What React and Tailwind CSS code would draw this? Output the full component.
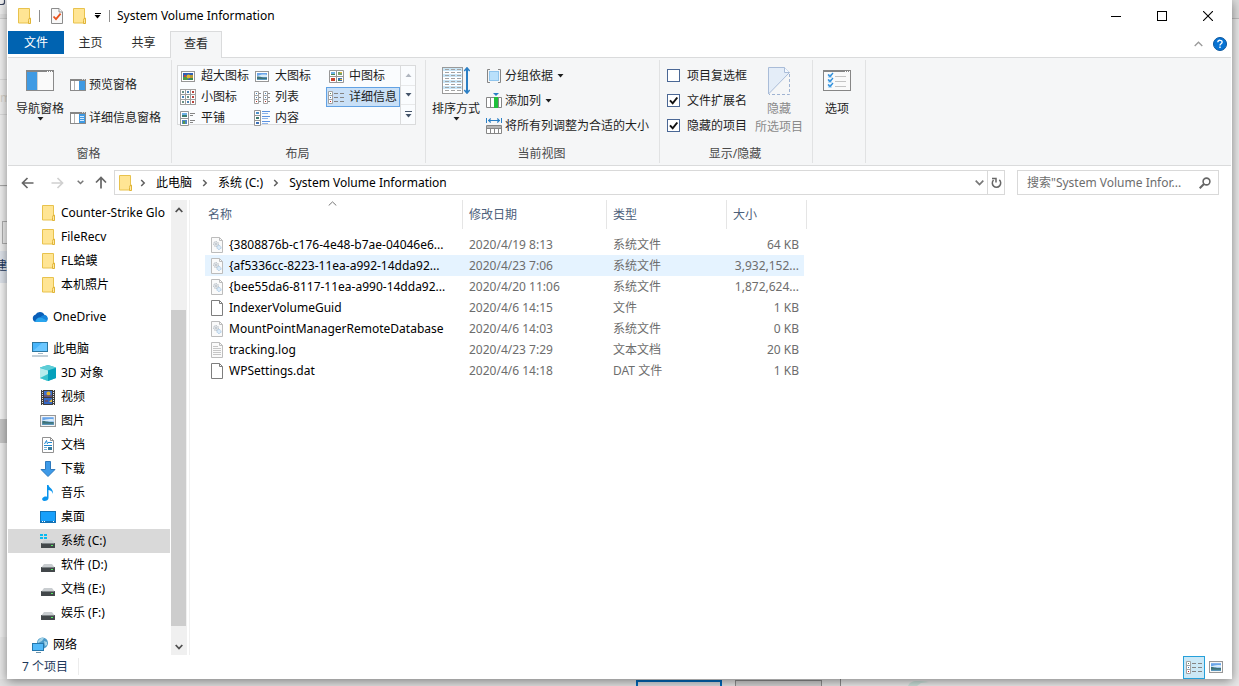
import React, { useState } from "react";

/* ---------- small glyphs ---------- */

const Folder = () => (
  <svg width="14" height="16" viewBox="0 0 14 16" className="shrink-0">
    <path d="M.5 .5h11v9.500h1v5h-12z" fill="#ffe594" stroke="#e8c24d" />
    <path d="M11 10.500h1.500v5h-2v-3z" fill="#ffe9a6" stroke="#e0b437" />
  </svg>
);

const Caret = ({ className = "" }) => (
  <svg width="7" height="4" viewBox="0 0 7 4" className={className}>
    <path d="M0.500 0h6L3.500 3.500z" fill="currentColor" />
  </svg>
);

const Chevron = () => (
  <svg width="6" height="8" viewBox="0 0 6 8" className="shrink-0">
    <path d="M1.200 1l3 3-3 3" fill="none" stroke="#5f5f5f" strokeWidth="1.500" />
  </svg>
);

const CheckedPage = () => (
  <svg width="14" height="16" viewBox="0 0 14 16">
    <path d="M1.500 .5h7.500l3.500 3.500v11.500h-11z" fill="#f8f8f8" stroke="#8c8c8c" />
    <path d="M9 .5v3.500h3.500" fill="#fff" stroke="#8c8c8c" />
    <path d="M3.500 8.500l2.500 2.700 4.600-5.500" fill="none" stroke="#e8521d" strokeWidth="1.800" />
  </svg>
);

const NavPaneIcon = () => (
  <svg width="28" height="21" viewBox="0 0 28 21">
    <rect x=".5" y=".5" width="27" height="20" fill="#fafafa" stroke="#8a8a8a" />
    <rect x="0" y="0" width="28" height="2" fill="#868686" />
    <path d="M21 1.500h1M23 1.500h1M25 1.500h1" stroke="#fff" />
    <rect x="1" y="2" width="10" height="18" fill="#3f9ae3" />
    <path d="M11.500 2v18" stroke="#d0d0d0" />
  </svg>
);

const PaneIcon = ({ lines }) => (
  <svg width="16" height="12" viewBox="0 0 16 12" className="shrink-0">
    <rect x=".5" y=".5" width="15" height="11" fill="#fff" stroke="#8a8a8a" />
    <rect width="16" height="2" fill="#868686" />
    <path d="M12 .5h1M14 .5h1" stroke="#ddd" />
    <path d="M4.500 2v9" stroke="#b4b4b4" />
    <rect x="9" y="2" width="6" height="9" fill="#3f9ae3" />
    {lines && <path d="M10 4.500h4M10 6.500h4M10 8.500h4" stroke="#d7ebff" />}
  </svg>
);

const Photo = ({ w = 14, h = 11 }) => (
  <svg width={w} height={h} viewBox="0 0 14 11" preserveAspectRatio="none" className="shrink-0">
    <rect x=".5" y=".5" width="13" height="10" fill="#fff" stroke="#979797" />
    <rect x="2" y="2" width="10" height="7" fill="#6aa5ea" />
    <path d="M2 5c3-1 6-2 10-1v2H2z" fill="#d9ecf8" />
    <path d="M2 5.500c3-.5 4 1.200 10 1V9H2z" fill="#3f7378" />
    <path d="M2 8h10v1H2z" fill="#5e9cc4" />
  </svg>
);

const HugeIcon = () => (
  <svg width="14" height="11" viewBox="0 0 14 11">
    <rect x=".5" y=".5" width="13" height="10" fill="#fff" stroke="#979797" />
    <rect x="2" y="2" width="10" height="7" fill="#2f5fb4" />
    <rect x="2" y="6" width="5" height="3" fill="#4f9a45" />
    <circle cx="7.500" cy="5.500" r="2" fill="#e3b52c" />
    <rect x="9" y="4" width="3" height="3" fill="#b99a38" />
    <rect x="3" y="4" width="2" height="2" fill="#c64b32" />
    <rect x="9" y="7" width="3" height="2" fill="#3c8a4c" />
  </svg>
);

const SmallGridIcon = () => (
  <svg width="16" height="16" viewBox="0 0 16 16">
    {[0, 5, 10].map((y) =>
      [0, 5, 10].map((x) => (
        <g key={x + "-" + y}>
          <rect x={x + 0.5} y={y + 0.5} width="5" height="5" fill="#fff" stroke="#a0a0a0" />
          <rect
            x={x + 2}
            y={y + 2}
            width="2"
            height="2"
            fill={x === 10 ? "#b8413a" : (x + y) % 2 ? "#4a83b5" : "#6a8f86"}
          />
        </g>
      ))
    )}
  </svg>
);

const MediumIcon = () => (
  <svg width="15" height="13" viewBox="0 0 15 13">
    <path d="M.5 .5h14v12H.5zM7.500 .5v12M.5 6.500h14" fill="#fff" stroke="#979797" />
    <rect x="2" y="2" width="4" height="3" fill="#6fb0e6" />
    <rect x="9" y="2" width="4" height="3" fill="#7aa06a" />
    <rect x="2" y="8" width="4" height="3" fill="#c8432c" />
    <rect x="9" y="8" width="4" height="3" fill="#3c6fb0" />
    <path d="M2 4.500h4M9 10.500h2" stroke="#3f8655" />
    <path d="M11 2.500h2M11 9.500h2" stroke="#e2b93a" />
  </svg>
);

const ListIcon = () => (
  <svg width="16" height="13" viewBox="0 0 16 13">
    {[0, 9].map((x) => (
      <g key={x}>
        <path d={`M${x + 0.5} .5h4v12h-4zM${x + 0.5} 4.500h4M${x + 0.5} 8.500h4`} fill="#fff" stroke="#a3a3a3" />
        <path d={`M${x + 2} 2.500h1M${x + 2} 6.500h1`} stroke="#4a83b5" />
        <path d={`M${x + 2} 10.500h1`} stroke="#b8322a" />
        <path d={`M${x + 5} 2.500h2M${x + 5} 6.500h2M${x + 5} 10.500h2`} stroke="#8a8a8a" />
      </g>
    ))}
  </svg>
);

const DetailsIcon = () => (
  <svg width="16" height="13" viewBox="0 0 16 13">
    <path d="M.5 .5h4v12h-4zM.5 4.500h4M.5 8.500h4" fill="#fff" stroke="#a3a3a3" />
    <path d="M2 2.500h1" stroke="#558a66" />
    <path d="M2 6.500h1" stroke="#3b7cc0" />
    <path d="M2 10.500h1" stroke="#c0282a" />
    <path d="M6 2.500h4M12 2.500h4M6 6.500h4M12 6.500h4M6 10.500h4M12 10.500h4" stroke="#858585" />
  </svg>
);

const TilesIcon = () => (
  <svg width="16" height="15" viewBox="0 0 16 15">
    <path d="M.5 .5h8v14h-8zM.5 7.500h8" fill="#fff" stroke="#979797" />
    <rect x="2" y="2" width="5" height="4" fill="#6fb0e6" />
    <rect x="2" y="4" width="5" height="2" fill="#3c7d70" />
    <rect x="2" y="9" width="5" height="4" fill="#4d86c4" />
    <rect x="3" y="10" width="2" height="3" fill="#58984b" />
    <path d="M10 2.500h5M10 4.500h3M10 9.500h5M10 11.500h3" stroke="#858585" />
  </svg>
);

const ContentIcon = () => (
  <svg width="16" height="16" viewBox="0 0 16 16">
    <path d="M.5 .5h6v15h-6zM.5 5.500h6M.5 10.500h6" fill="#fff" stroke="#979797" />
    <rect x="2" y="2" width="3" height="2" fill="#4b8fca" />
    <rect x="2" y="7" width="3" height="2" fill="#3f7a6d" />
    <rect x="2" y="12" width="3" height="2" fill="#3b6fb5" />
    <path d="M8 1.500h8M8 6.500h8M8 11.500h8" stroke="#5c92e0" />
    <path d="M8 3.500h6M8 8.500h6M8 13.500h6" stroke="#8fb5ea" />
  </svg>
);

const SortIcon = () => (
  <svg width="28" height="27" viewBox="0 0 28 27">
    <rect x=".5" y=".5" width="20" height="26" fill="#fff" stroke="#9a9a9a" />
    <path d="M1 2.500h19M1 8.500h19M1 14.500h19M1 20.500h19" stroke="#c9e6f7" strokeWidth="3" />
    <path
      d="M3 2.500h16M3 5.500h16M3 8.500h16M3 11.500h16M3 14.500h16M3 17.500h16M3 20.500h16M3 23.500h16"
      stroke="#a3a3a3"
      strokeDasharray="4 2"
    />
    <path d="M25 2v23" stroke="#2b7fc4" strokeWidth="2" />
    <path d="M22.300 4L25 .8 27.700 4M22.300 23l2.700 3.200 2.700-3.200" fill="none" stroke="#2b7fc4" strokeWidth="1.500" />
  </svg>
);

const GroupIcon = () => (
  <svg width="16" height="14" viewBox="0 0 16 14">
    <rect x="3.500" y="2.500" width="9" height="9" fill="#b9e0fb" stroke="#8fc4ec" />
    <path d="M4 .5H1.500v13H4M12 .5h2.500v13H12" fill="none" stroke="#858585" />
  </svg>
);

const AddColumnIcon = () => (
  <svg width="16" height="16" viewBox="0 0 16 16">
    <path d="M.5 4.500h15v10H.5zM4.500 4.500v10M12.500 4.500v10" fill="#fff" stroke="#868686" />
    <rect x="8" y="4" width="4" height="11" fill="#1fbf3c" />
    <path d="M7 0h6l-3 3z" fill="#2b7fc4" />
  </svg>
);

const SizeColumnsIcon = () => (
  <svg width="16" height="16" viewBox="0 0 16 16">
    <path d="M.5 0v5M15.500 0v5" stroke="#2b7fc4" />
    <path d="M2 2.500h12M4.700 .5l-2 2 2 2M11.300 .5l2 2-2 2" fill="none" stroke="#2b7fc4" strokeWidth="1.100" />
    <path d="M.5 7.500h15v8H.5zM.5 10.500h15M4.500 10.500v5M8.500 10.500v5M12.500 10.500v5" fill="#fff" stroke="#868686" />
    <rect x="1" y="8" width="14" height="2" fill="#b5b5b5" />
  </svg>
);

const HideIcon = () => (
  <svg width="23" height="28" viewBox="0 0 23 28">
    <path d="M.5 .5h16l5 5L.5 27z" fill="#e4edf8" stroke="#a9bcd8" />
    <path d="M16.500 .5v5h5" fill="#f5f9ff" stroke="#a9bcd8" />
    <path d="M21.500 7v20.500H1" fill="none" stroke="#9fb3d2" strokeDasharray="3 2" />
  </svg>
);

const OptionsIcon = () => (
  <svg width="28" height="21" viewBox="0 0 28 21">
    <rect x=".5" y=".5" width="27" height="20" fill="#fafafa" stroke="#868686" />
    <rect width="28" height="2" fill="#868686" />
    <path d="M22 1.500h1M24 1.500h1M26 1.500h1" stroke="#fff" />
    {[3, 8, 13].map((y) => (
      <g key={y}>
        <rect x="5" y={y + 1} width="4" height="4" fill="#c4e2f8" />
        <path d={`M5 ${y + 1.5}l2 2L10 ${y}`} fill="none" stroke="#2f8fdc" strokeWidth="1.300" />
        <path d={`M12 ${y + 3.5}h11`} stroke="#c4c4c4" />
      </g>
    ))}
  </svg>
);

/* ---------- navigation tree icons ---------- */

const CloudIcon = () => (
  <svg width="17" height="16" viewBox="0 0 17 16" className="shrink-0">
    <path d="M4 13a3.700 3.700 0 0 1-.6-7.200A5 5 0 0 1 12.500 6 3.700 3.700 0 0 1 13 13z" fill="#0a5fb8" />
    <path d="M12.500 6a3.600 3.600 0 0 1 .8 7H6L8 8.500A6 6 0 0 1 12.500 6z" fill="#1685dc" />
    <path d="M3 13c1-4 4-5.500 7-4l5 2.500A2.500 2.500 0 0 1 13 13z" fill="#2aa5ee" />
  </svg>
);
const ComputerIcon = () => (
  <svg width="17" height="16" viewBox="0 0 17 16" className="shrink-0">
    <rect x=".5" y="1.500" width="15" height="9" fill="#48b5fb" stroke="#2c769f" />
    <path d="M1 10L10 2h5v8z" fill="#6bc7ff" />
    <path d="M6 12.500h5" stroke="#a5bac7" />
    <path d="M0 15h16" stroke="#8aa2b1" />
  </svg>
);
const CubeIcon = () => (
  <svg width="16" height="16" viewBox="0 0 16 16" className="shrink-0">
    <path d="M8 0l8 2.500v10.500L8 16 0 13V2.500z" fill="#28bccd" />
    <path d="M0 2.500L8 0l8 2.500L8 5.500z" fill="#5ecdd6" />
    <path d="M0 3l8 2.500V16L0 13z" fill="#b5eced" />
    <path d="M0 13l8-4v7z" fill="#37c2cd" />
    <path d="M16 3L8 5.500V16l8-3z" fill="#04a0bb" />
  </svg>
);
const VideoIcon = () => (
  <svg width="16" height="16" viewBox="0 0 16 16" className="shrink-0">
    <rect x="1" y="1" width="14" height="15" fill="#3d3d3d" />
    <path d="M2.500 1v15M13.500 1v15" stroke="#e8e8e8" strokeDasharray="1 1" />
    <rect x="4" y="2" width="8" height="6" fill="#3c70d0" />
    <rect x="4" y="9" width="8" height="6" fill="#3568c5" />
    <circle cx="8.500" cy="4.500" r="2" fill="#e4b32a" />
    <path d="M4 7h8M5 12h3" stroke="#8b3d28" />
    <path d="M9 13l3-3v3z" fill="#e7bf38" />
  </svg>
);
const DocumentIcon = () => (
  <svg width="16" height="16" viewBox="0 0 16 16" className="shrink-0">
    <path d="M2.500 .5h8l3 3v12h-11z" fill="#fff" stroke="#919191" />
    <path d="M10.500 .5v3h3" fill="none" stroke="#919191" />
    <path d="M4.500 7l2-3.500 1 3.500M8 5.500h4M4 8.500h8" fill="none" stroke="#2188cf" />
    <path d="M4 10.500h3M4 12.500h3" stroke="#75afd6" />
    <rect x="8" y="10" width="4" height="3" fill="#367b9d" />
  </svg>
);
const DownloadIcon = () => (
  <svg width="16" height="16" viewBox="0 0 16 16" className="shrink-0">
    <path d="M5.500 .5h5v8h4.500L8 15.500 1 8.500h4.500z" fill="#3d9ae8" stroke="#2d79bd" />
  </svg>
);
const MusicIcon = () => (
  <svg width="16" height="16" viewBox="0 0 16 16" className="shrink-0">
    <path
      d="M7 0h1.500c.5 3 5 3.500 4.500 9-.6-2.500-2-3.500-4.500-4v8c0 2-2 3-4 3S1.500 14.500 2.500 13 5.500 11 7 11.700z"
      fill="#0a94ed"
    />
  </svg>
);
const DesktopIcon = () => (
  <svg width="16" height="16" viewBox="0 0 16 16" className="shrink-0">
    <rect x=".5" y="2.500" width="15" height="11" fill="#18a0fb" stroke="#1272b6" />
    <path d="M1 12.500h14" stroke="#1272b6" />
    <path d="M2 12.500h1M4 12.500h1M13 12.500h1" stroke="#fff" />
  </svg>
);
const DriveIcon = ({ system }) => (
  <svg width="16" height="16" viewBox="0 0 16 16" className="shrink-0">
    <path d="M4 7h8l3 4H1z" fill="#c9cdd0" />
    <rect x="1" y="10" width="14" height="5" rx=".5" fill="#42474a" />
    <path d="M2 10.500h12" stroke="#7c8285" />
    <rect x="11" y="12" width="2" height="1" fill="#54ed62" />
    {system && (
      <>
        <rect width="7" height="7" fill="#d9d9d9" />
        <path d="M0 1h3v2H0zM4 1h3v2H4zM0 4h3v2H0zM4 4h3v2H4z" fill="#0abaf0" />
      </>
    )}
  </svg>
);
const NetworkIcon = () => (
  <svg width="17" height="16" viewBox="0 0 17 16" className="shrink-0">
    <circle cx="10.500" cy="6" r="5.500" fill="#4c9bc9" />
    <path d="M6 4c2-3 4-4 6-3l-2 3-4 2zM12 4l3 1v3l-2 1z" fill="#a5d4e8" />
    <rect x=".5" y="6.500" width="11" height="7" fill="#52bafa" stroke="#2577ac" />
    <path d="M4 15.500h5" stroke="#6d94ac" />
  </svg>
);

/* ---------- file icons ---------- */

const FileIcon = ({ kind }) => (
  <svg width="13" height="16" viewBox="0 0 13 16" className="shrink-0">
    <path
      d="M.5 .5h8l3 3v12H.5z"
      fill={kind === "blank" ? "#fff" : "#fafafa"}
      stroke={kind === "blank" ? "#7e7e7e" : "#bcbcbc"}
    />
    <path d="M8.500 .5v3h3" fill="none" stroke={kind === "blank" ? "#7e7e7e" : "#bcbcbc"} />
    {kind === "system" && (
      <>
        <circle cx="5" cy="7" r="2.500" fill="#e9edf0" stroke="#b5bcc3" strokeDasharray="1.500 .7" />
        <circle cx="5" cy="7" r="1" fill="none" stroke="#bcc2c8" />
        <circle cx="8" cy="10.500" r="2" fill="#dcebf8" stroke="#a5c5e3" strokeDasharray="1.500 .7" />
      </>
    )}
    {kind === "text" && <path d="M2 4.500h5M2 6.500h8M2 8.500h8M2 10.500h8M2 12.500h8" stroke="#c6c6c6" />}
  </svg>
);

/* ---------- data ---------- */

const tree = [
  { label: "Counter-Strike Glo", icon: Folder, level: 2, folder: true },
  { label: "FileRecv", icon: Folder, level: 2, folder: true },
  { label: "FL蛤蟆", icon: Folder, level: 2, folder: true },
  { label: "本机照片", icon: Folder, level: 2, folder: true },
  { label: "OneDrive", icon: CloudIcon, level: 1 },
  { label: "此电脑", icon: ComputerIcon, level: 1 },
  { label: "3D 对象", icon: CubeIcon, level: 2 },
  { label: "视频", icon: VideoIcon, level: 2 },
  { label: "图片", icon: () => <Photo w={16} h={12} />, level: 2 },
  { label: "文档", icon: DocumentIcon, level: 2 },
  { label: "下载", icon: DownloadIcon, level: 2 },
  { label: "音乐", icon: MusicIcon, level: 2 },
  { label: "桌面", icon: DesktopIcon, level: 2 },
  { label: "系统 (C:)", icon: () => <DriveIcon system />, level: 2, selected: true },
  { label: "软件 (D:)", icon: DriveIcon, level: 2 },
  { label: "文档 (E:)", icon: DriveIcon, level: 2 },
  { label: "娱乐 (F:)", icon: DriveIcon, level: 2 },
  { label: "网络", icon: NetworkIcon, level: 1 },
];

const files = [
  ["{3808876b-c176-4e48-b7ae-04046e6...", "2020/4/19 8:13", "系统文件", "64 KB", "system"],
  ["{af5336cc-8223-11ea-a992-14dda92...", "2020/4/23 7:06", "系统文件", "3,932,152...", "system"],
  ["{bee55da6-8117-11ea-a990-14dda92...", "2020/4/20 11:06", "系统文件", "1,872,624...", "system"],
  ["IndexerVolumeGuid", "2020/4/6 14:15", "文件", "1 KB", "blank"],
  ["MountPointManagerRemoteDatabase", "2020/4/6 14:03", "系统文件", "0 KB", "system"],
  ["tracking.log", "2020/4/23 7:29", "文本文档", "20 KB", "text"],
  ["WPSettings.dat", "2020/4/6 14:18", "DAT 文件", "1 KB", "blank"],
];

const layouts = [
  ["超大图标", HugeIcon],
  ["大图标", Photo],
  ["中图标", MediumIcon],
  ["小图标", SmallGridIcon],
  ["列表", ListIcon],
  ["详细信息", DetailsIcon],
  ["平铺", TilesIcon],
  ["内容", ContentIcon],
];

/* ---------- sections ---------- */

/* Slivers of the windows that lie behind the file manager. */
function Desktop() {
  return (
    <div aria-hidden="true" className="absolute inset-0 overflow-hidden bg-[#e8e8e8] text-xs">
      <div className="absolute left-0 top-0 h-[186px] w-2 border-b border-[#a8a8a8] bg-[#f0f0f0]" />
      <div className="absolute left-0 top-[14px] h-[5px] w-2 border-b border-[#cfcfcf] bg-[#e4e4e4]" />
      <svg width="7" height="6" className="absolute left-0 top-0">
        <path d="M4.500 0v2.500c0 1.500-1 2-2.500 2H0" fill="none" stroke="#3c4660" strokeWidth="1.200" />
      </svg>
      <div className="absolute left-0 top-[79px] h-px w-2 bg-[#dcdcdc]" />
      <span className="absolute left-0 top-[90px] text-[#d8d4cb]">m</span>
      <div className="absolute left-0 top-[114px] h-px w-2 bg-[#dcdcdc]" />
      <div className="absolute left-0 top-[187px] h-[450px] w-2 bg-[#f0f0f0]" />
      <div className="absolute left-[2px] top-[221px] h-[23px] w-4 border border-[#b0b0b0]" />
      <div className="absolute left-0 top-[251px] h-8 w-2 bg-[#dfe4ec]" />
      <span className="absolute -left-[5px] top-[258px] text-[#1e3a5f]">建</span>
      <div className="absolute left-0 top-[283px] h-[136px] w-2 bg-[#f6f6f6]" />
      <div className="absolute left-0 top-[419px] h-6 w-2 bg-[#c8c8c8]" />
      <div className="absolute right-0 top-0 h-[19px] w-[7px] border-b border-[#bdbdbd] bg-[#dcdcdc]" />
      <div className="absolute bottom-0 left-0 h-[7px] w-[841px] border-r border-[#8c8c8c] bg-[#e0e0e0]" />
      <div className="absolute bottom-0 left-[636px] h-[6px] w-[86px] border-2 border-b-0 border-[#0067b8] bg-[#d5d8dc]" />
      <div className="absolute bottom-0 left-[735px] h-[6px] w-[87px] border border-b-0 border-[#8c8c8c] bg-[#d0d0d0]" />
      <svg width="24" height="6" className="absolute bottom-0 left-[907px]">
        <path d="M1 6c1-3 4-5 9-5 4 0 8 0 12 1l-8 1-4 3z" fill="#c9dfd8" />
      </svg>
    </div>
  );
}

function TitleBar() {
  return (
    <header className="flex h-[31px] shrink-0 items-center pl-[10px]">
      <Folder />
      <span className="ml-[7px] h-3 w-px bg-[#8e8e8e]" />
      <button type="button" aria-label="属性" className="ml-[10px]">
        <CheckedPage />
      </button>
      <button type="button" aria-label="新建文件夹" className="ml-[9px]">
        <Folder />
      </button>
      <button
        type="button"
        aria-label="自定义快速访问工具栏"
        className="ml-[7px] flex flex-col items-center gap-px text-black"
      >
        <span className="h-px w-[6px] bg-black" />
        <Caret />
      </button>
      <span className="ml-2 h-3 w-px bg-[#8e8e8e]" />
      <h1 className="ml-[7px] flex-1 text-black">System Volume Information</h1>
      <button type="button" aria-label="最小化" className="flex h-full w-[46px] items-center justify-center">
        <svg width="10" height="10">
          <path d="M0 5.500h10" stroke="#000" />
        </svg>
      </button>
      <button type="button" aria-label="最大化" className="flex h-full w-[46px] items-center justify-center">
        <svg width="10" height="10">
          <rect x=".5" y=".5" width="9" height="9" fill="none" stroke="#000" />
        </svg>
      </button>
      <button type="button" aria-label="关闭" className="flex h-full w-[46px] items-center justify-center">
        <svg width="10" height="10">
          <path d="M0 0l10 10M10 0L0 10" stroke="#000" strokeWidth="1.100" />
        </svg>
      </button>
    </header>
  );
}

function RibbonTabs() {
  return (
    <nav className="flex h-[27px] shrink-0 items-stretch border-b border-[#dadbdc]">
      <button type="button" className="mb-[3px] w-14 bg-[#0063b1] text-white">文件</button>
      <button type="button" className="w-[53px] pb-[2px]">主页</button>
      <button type="button" className="w-[53px] pb-[2px]">共享</button>
      <button type="button" className="-mb-px w-[52px] border border-b-0 border-[#dadbdc] bg-[#f5f6f7] pb-[2px]">
        查看
      </button>
      <span className="flex-1" />
      <button type="button" aria-label="最小化功能区" className="mr-[10px]">
        <svg width="9" height="6">
          <path d="M.7 5l3.800-3.800L8.300 5" fill="none" stroke="#9a9a9a" strokeWidth="1.300" />
        </svg>
      </button>
      <button type="button" aria-label="帮助" className="mr-1">
        <svg width="14" height="14" viewBox="0 0 14 14">
          <circle cx="7" cy="7" r="6.500" fill="#0873d3" stroke="#0a559c" />
          <path
            d="M4.800 5.200c.2-2.600 4.400-2.400 4.300 0 0 1.500-2.100 1.500-2.100 3.200M7 9.600v1.500"
            fill="none"
            stroke="#fff"
            strokeWidth="1.400"
          />
        </svg>
      </button>
    </nav>
  );
}

function Group({ label, className, children }) {
  return (
    <section className={"my-[2px] flex shrink-0 flex-col border-r border-[#e1e2e3] " + className}>
      <div className="flex h-[85px]">{children}</div>
      <h2 className="pr-[2px] text-center leading-[18px] text-[#4a4a4a]">{label}</h2>
    </section>
  );
}

function BigButton({ icon, label, caret, className = "" }) {
  return (
    <button type="button" className={"flex flex-col items-center self-start " + className}>
      <span className="flex h-[41px] items-center">{icon}</span>
      <span className="mt-px leading-[14px]">{label}</span>
      {caret && <Caret className="mt-px" />}
    </button>
  );
}

function SmallButton({ icon, label, caret, className = "h-[25px]" }) {
  return (
    <button type="button" className={"flex items-center gap-[3px] whitespace-nowrap " + className}>
      {icon}
      <span>{label}</span>
      {caret && <Caret className="ml-px" />}
    </button>
  );
}

function Option({ label, initial }) {
  const [on, setOn] = useState(initial);
  return (
    <label className="flex h-[25px] items-center gap-[7px] whitespace-nowrap">
      <span className="grid">
        <input
          type="checkbox"
          checked={on}
          onChange={() => setOn(!on)}
          className="peer col-start-1 row-start-1 size-[13px] appearance-none border border-[#4a6795] bg-white"
        />
        <svg
          width="13"
          height="13"
          className="pointer-events-none col-start-1 row-start-1 hidden peer-checked:block"
        >
          <path d="M3 6.300l2.700 3L10.300 3.500" fill="none" stroke="#111" strokeWidth="2" />
        </svg>
      </span>
      {label}
    </label>
  );
}

function Ribbon() {
  const [view, setView] = useState("详细信息");
  return (
    <div className="flex h-[108px] shrink-0 border-b border-[#dadbdc] bg-[#f5f6f7] text-[#1e1e1e]">
      <Group label="窗格" className="w-[164px]">
        <BigButton className="ml-2" icon={<NavPaneIcon />} label="导航窗格" caret />
        <div className="ml-[6px] flex flex-col pt-2">
          <SmallButton className="h-[33px]" icon={<PaneIcon />} label="预览窗格" />
          <SmallButton className="h-[33px]" icon={<PaneIcon lines />} label="详细信息窗格" />
        </div>
      </Group>

      <Group label="布局" className="w-[254px]">
        <div className="ml-[5px] mt-[5px] flex h-[60px] w-[239px] border border-[#dadbdc] bg-[#fafcfe]">
          <div className="grid flex-1 auto-rows-[20px] grid-cols-3 gap-y-px">
            {layouts.map(([name, Icon]) => (
              <button
                key={name}
                type="button"
                aria-pressed={view === name}
                onClick={() => setView(name)}
                className={
                  "flex items-center whitespace-nowrap border leading-3 " +
                  (view === name ? "border-[#62a2e4] bg-[#c9e0f7]" : "border-transparent")
                }
              >
                <span className="flex w-[18px] justify-center">
                  <Icon />
                </span>
                <span className="ml-1">{name}</span>
              </button>
            ))}
          </div>
          <div className="flex w-[15px] flex-col border-l border-[#dadbdc] text-[#44546a]">
            <button
              type="button"
              aria-label="上一行"
              className="flex flex-1 items-center justify-center border-b border-[#e8e9ea] text-[#b0b6bf]"
            >
              <Caret className="rotate-180" />
            </button>
            <button
              type="button"
              aria-label="下一行"
              className="flex flex-1 items-center justify-center border-b border-[#e8e9ea]"
            >
              <Caret />
            </button>
            <button
              type="button"
              aria-label="更多"
              className="flex flex-1 flex-col items-center justify-center gap-[2px]"
            >
              <span className="h-px w-[7px] bg-[#44546a]" />
              <Caret />
            </button>
          </div>
        </div>
      </Group>

      <Group label="当前视图" className="w-[234px]">
        <BigButton className="ml-[6px]" icon={<SortIcon />} label="排序方式" caret />
        <div className="ml-[6px] flex flex-col pt-[3px]">
          <SmallButton icon={<GroupIcon />} label="分组依据" caret />
          <SmallButton icon={<AddColumnIcon />} label="添加列" caret />
          <SmallButton icon={<SizeColumnsIcon />} label="将所有列调整为合适的大小" />
        </div>
      </Group>

      <Group label="显示/隐藏" className="w-[153px]">
        <div className="ml-[7px] flex flex-col pt-[3px]">
          <Option label="项目复选框" initial={false} />
          <Option label="文件扩展名" initial />
          <Option label="隐藏的项目" initial />
        </div>
        <button type="button" disabled className="ml-2 flex flex-col items-center self-start text-[#8a8a8a]">
          <span className="flex h-[41px] items-center">
            <HideIcon />
          </span>
          <span className="mt-px leading-[14px]">隐藏</span>
          <span className="mt-1 leading-[14px]">所选项目</span>
        </button>
      </Group>

      <Group label="" className="w-[53px]">
        <BigButton className="ml-[10px]" icon={<OptionsIcon />} label="选项" />
      </Group>
    </div>
  );
}

function AddressRow() {
  return (
    <div className="flex h-[34px] shrink-0 items-center pb-px pl-[13px] pr-3 text-black">
      <button type="button" aria-label="后退">
        <svg width="13" height="12">
          <path d="M12.500 6H1.500M6.500 1L1.500 6l5 5" fill="none" stroke="#666" strokeWidth="1.700" />
        </svg>
      </button>
      <button type="button" aria-label="前进" className="ml-[17px]">
        <svg width="13" height="12">
          <path d="M.5 6h11M6.500 1l5 5-5 5" fill="none" stroke="#d0d0d0" strokeWidth="1.700" />
        </svg>
      </button>
      <button type="button" aria-label="最近浏览的位置" className="ml-[13px]">
        <svg width="7" height="5">
          <path d="M.7 .7l2.800 2.800L6.300 .7" fill="none" stroke="#777" strokeWidth="1.500" />
        </svg>
      </button>
      <button type="button" aria-label="上移" className="ml-[11px]">
        <svg width="12" height="13">
          <path d="M6 12.500V1.500M1 6.500l5-5 5 5" fill="none" stroke="#666" strokeWidth="1.700" />
        </svg>
      </button>
      <div className="ml-[7px] flex h-[25px] flex-1 items-center border border-[#d9d9d9] bg-white pl-1">
        <Folder />
        <nav aria-label="路径" className="ml-[7px] flex flex-1 items-center gap-[10px] leading-[14px]">
          <Chevron />
          <a href="#pc">此电脑</a>
          <Chevron />
          <a href="#c">系统 (C:)</a>
          <Chevron />
          <a href="#svi">System Volume Information</a>
        </nav>
        <button type="button" aria-label="以前的位置" className="mr-[3px]">
          <svg width="9" height="6">
            <path d="M.7 .7l3.800 3.800L8.300 .7" fill="none" stroke="#777" strokeWidth="1.700" />
          </svg>
        </button>
        <button
          type="button"
          aria-label="刷新"
          className="flex h-full w-[17px] items-center justify-center border-l border-[#d9d9d9]"
        >
          <svg width="11" height="12" viewBox="0 0 11 12">
            <path d="M8.300 2.900A4.200 4.200 0 1 1 2.500 3.100" fill="none" stroke="#666" strokeWidth="1.500" />
            <path d="M1 1.500h4v4" fill="none" stroke="#666" strokeWidth="1.500" />
          </svg>
        </button>
      </div>
      <div className="ml-3 flex h-[25px] w-[202px] items-center border border-[#d9d9d9] pl-[9px] pr-[7px]">
        <input
          type="text"
          aria-label="搜索"
          placeholder={'搜索"System Volume Infor...'}
          className="min-w-0 flex-1 bg-transparent outline-none placeholder:text-[#6d6d6d]"
        />
        <svg width="12" height="12" viewBox="0 0 12 12" className="shrink-0">
          <circle cx="7.500" cy="4.500" r="3.400" fill="none" stroke="#666" strokeWidth="1.600" />
          <path d="M5 7L.7 11.300" stroke="#666" strokeWidth="2" />
        </svg>
      </div>
    </div>
  );
}

function Sidebar() {
  return (
    <aside className="flex w-[182px] shrink-0 border-r border-[#f0f0f0]">
      <ul className="w-[162px] overflow-hidden pt-px text-black">
        {tree.map(({ label, icon: Icon, level, folder, selected }) => (
          <li key={label} className={level === 1 ? "pt-2" : ""}>
            <a
              href="#item"
              className={
                "flex h-6 items-center whitespace-nowrap " +
                (selected ? "bg-[#d9d9d9] " : "") +
                (folder ? "gap-[5px] pl-[34px]" : level === 1 ? "gap-1 pl-6" : "gap-[5px] pl-8")
              }
            >
              <Icon />
              <span>{label}</span>
            </a>
          </li>
        ))}
      </ul>
      <div className="ml-px flex w-4 flex-col bg-[#f0f0f0]">
        <button type="button" aria-label="向上滚动" className="flex h-[19px] items-center justify-center">
          <svg width="8" height="6">
            <path d="M.7 5L4 1.500 7.300 5" fill="none" stroke="#505050" strokeWidth="1.800" />
          </svg>
        </button>
        <div className="mr-px mt-[91px] flex-1 bg-[#cdcdcd]" />
        <button type="button" aria-label="向下滚动" className="mt-3 flex h-[17px] items-center justify-center">
          <svg width="8" height="6">
            <path d="M.7 1L4 4.500 7.300 1" fill="none" stroke="#505050" strokeWidth="1.800" />
          </svg>
        </button>
      </div>
    </aside>
  );
}

function HeaderCell({ children, className = "" }) {
  return (
    <th className="p-0 pb-[5px] font-normal">
      <div
        className={
          "flex h-[29px] items-center border-r border-[#e5e5e5] text-left text-[#4c607a] " + className
        }
      >
        {children}
      </div>
    </th>
  );
}

function FileTable() {
  return (
    <main className="min-w-0 flex-1 overflow-hidden pl-[15px]">
      <table className="w-[602px] table-fixed border-collapse whitespace-nowrap text-[#6d6d6d]">
        <colgroup>
          <col className="w-[258px]" />
          <col className="w-[144px]" />
          <col className="w-[120px]" />
          <col className="w-[77px]" />
          <col className="w-[3px]" />
        </colgroup>
        <thead>
          <tr>
            <HeaderCell className="relative pl-[3px]">
              名称
              <svg width="9" height="5" className="absolute left-[123px] top-px">
                <path d="M.7 4.500L4.500 .9l3.800 3.600" fill="none" stroke="#777" />
              </svg>
            </HeaderCell>
            <HeaderCell className="pl-[6px]">修改日期</HeaderCell>
            <HeaderCell className="pl-[6px]">类型</HeaderCell>
            <HeaderCell className="border-r-0 pl-[6px]">大小</HeaderCell>
            <HeaderCell />
          </tr>
        </thead>
        <tbody>
          {files.map(([name, date, type, size, kind], i) => (
            <tr key={name} className="h-[21px]">
              <td className={"p-0 pl-[6px] text-black " + (i === 1 ? "bg-[#e5f3ff]" : "")}>
                <div className="flex items-center gap-[5px]">
                  <FileIcon kind={kind} />
                  <span>{name}</span>
                </div>
              </td>
              <td className={"p-0 pl-[6px] " + (i === 1 ? "bg-[#e5f3ff]" : "")}>{date}</td>
              <td className={"p-0 pl-[6px] " + (i === 1 ? "bg-[#e5f3ff]" : "")}>{type}</td>
              <td className={"p-0 pr-[5px] text-right " + (i === 1 ? "bg-[#e5f3ff]" : "")}>{size}</td>
              <td className="p-0" />
            </tr>
          ))}
        </tbody>
      </table>
    </main>
  );
}

function StatusBar() {
  return (
    <footer className="flex h-6 shrink-0 items-center pl-[14px] pr-2 text-[#1e395b]">
      <span className="flex-1">
        <span className="border-r border-[#ececec] pr-[10px]">7 个项目</span>
      </span>
      <button
        type="button"
        aria-label="详细信息视图"
        aria-pressed="true"
        className="flex h-[23px] w-[22px] items-center justify-center border border-[#26a0da] bg-[#cbe8f6]"
      >
        <DetailsIcon />
      </button>
      <button type="button" aria-label="大图标视图" className="ml-1 flex w-[14px] justify-center">
        <Photo w={14} h={12} />
      </button>
    </footer>
  );
}

export default function App() {
  return (
    <div className="relative h-screen pb-[7px] pl-[7px] pr-[7px] font-['Noto_Sans','Noto_Sans_CJK_SC',sans-serif] text-xs text-[#2b2b2b]">
      <Desktop />
      <div className="relative flex h-full flex-col bg-white pl-px pr-px shadow-[0_2px_10px_rgba(0,0,0,0.45)]">
        <TitleBar />
        <RibbonTabs />
        <Ribbon />
        <AddressRow />
        <div className="flex min-h-0 flex-1">
          <Sidebar />
          <FileTable />
        </div>
        <StatusBar />
      </div>
    </div>
  );
}
